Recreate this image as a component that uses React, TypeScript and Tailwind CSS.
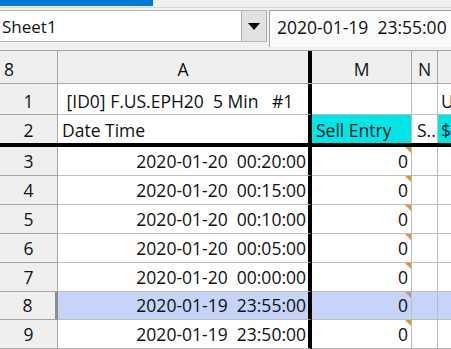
const rows = [
  { n: 3, dt: "2020-01-20  00:20:00", h: "h-[29px]" },
  { n: 4, dt: "2020-01-20  00:15:00", h: "h-[29px]" },
  { n: 5, dt: "2020-01-20  00:10:00", h: "h-[29px]" },
  { n: 6, dt: "2020-01-20  00:05:00", h: "h-[29px]" },
  { n: 7, dt: "2020-01-20  00:00:00", h: "h-[29px]" },
  { n: 8, dt: "2020-01-19  23:55:00", h: "h-[28px]", selected: true },
  { n: 9, dt: "2020-01-19  23:50:00", h: "h-[29px]" },
];

function Corner({ selected }: { selected?: boolean }) {
  return (
    <div
      className={`absolute right-0 top-0 w-0 h-0 border-t-[6px] border-l-[6px] border-l-transparent ${
        selected ? "border-t-[#b39a90]" : "border-t-[#e8912f]"
      }`}
    />
  );
}

export default function App() {
  return (
    <div className="w-[451px] h-[349px] overflow-hidden bg-[#f0f0f0] text-[17.5px] leading-[23px] text-[#111] font-['Open_Sans',sans-serif]">
      {/* window strip */}
      <div className="flex h-[8px] border-b border-[#d4d4d4]">
        <div className="w-[153px] h-[6px] bg-[#0078d7]" />
      </div>

      {/* name box + formula bar */}
      <div className="flex h-[42px] pt-[2px]">
        <div className="flex h-[32px] w-[267px] border-y border-[#b9b9b9] bg-white">
          <div className="flex-1 flex items-end pl-[2px] pb-[3px] text-[17px]">Sheet1</div>
          <div className="w-[26px] flex items-center justify-center bg-[#e1e1e1] border-l border-r border-[#adadad]">
            <div className="w-0 h-0 border-x-[6px] border-x-transparent border-t-[7px] border-t-black" />
          </div>
        </div>
        <div className="ml-[2px] flex-1 h-[37px] border-l border-t border-[#a0a0a0] bg-[#fbfbfb] flex items-start pt-[5px] pl-[7px] whitespace-pre">
          2020-01-19  23:55:00
        </div>
      </div>

      {/* column header row */}
      <div className="flex h-[34px] border-y border-[#a6a6a6] bg-[#efefef]">
        <div className="w-[58px] border-r border-[#a6a6a6] flex items-end pl-[4px] pb-[2px]">8</div>
        <div className="w-[254px] border-r-4 border-black flex items-end justify-center pb-[2px]">A</div>
        <div className="w-[100px] border-r border-[#a6a6a6] flex items-end justify-center pb-[2px]">M</div>
        <div className="w-[26px] border-r border-[#a6a6a6] flex items-end justify-center pb-[2px]">N</div>
        <div className="flex-1" />
      </div>

      {/* row 1 */}
      <div className="flex h-[31px] bg-white">
        <div className="w-[58px] bg-[#efefef] border-r border-b border-[#a6a6a6] flex items-end justify-center pb-[1px]">1</div>
        <div className="w-[254px] border-r-4 border-r-black border-b border-b-[#bdbdbd] flex items-end pl-[4px] pb-[1px] whitespace-pre overflow-hidden">
          {" [ID0] F.US.EPH20  5 Min   #1"}
        </div>
        <div className="w-[100px] border-r border-b border-[#bdbdbd]" />
        <div className="w-[26px] border-r border-b border-[#bdbdbd]" />
        <div className="flex-1 border-b border-[#bdbdbd] flex items-end pl-[3px] pb-[1px] overflow-hidden">U</div>
      </div>

      {/* row 2 */}
      <div className="flex h-[32px] bg-white border-b-4 border-black">
        <div className="w-[58px] bg-[#efefef] border-r border-[#a6a6a6] flex items-end justify-center pb-[1px]">2</div>
        <div className="w-[254px] border-r-4 border-black flex items-end pl-[4px] pb-[1px]">Date Time</div>
        <div className="w-[100px] bg-[#00e6e6] border-r border-[#bdbdbd] flex items-end pl-[4px] pb-[1px] whitespace-pre">Sell Entry</div>
        <div className="w-[26px] border-r border-[#bdbdbd] flex items-end pl-[5px] pb-[1px] overflow-hidden">S..</div>
        <div className="flex-1 bg-[#00e6e6] flex items-end pl-[3px] pb-[1px] overflow-hidden">$</div>
      </div>

      {/* data rows */}
      {rows.map((r) => (
        <div key={r.n} className={`flex ${r.h} ${r.selected ? "bg-[#c6d4fa]" : "bg-white"}`}>
          <div
            className={`w-[58px] bg-[#efefef] border-b border-b-[#a6a6a6] flex items-end justify-center pb-[2px] ${
              r.selected ? "border-r-[3px] border-r-[#8e8e8e]" : "border-r border-r-[#a6a6a6]"
            }`}
          >
            {r.n}
          </div>
          <div className="w-[254px] border-r-4 border-r-black border-b border-b-[#bdbdbd] flex items-end justify-end pr-[2px] pb-[2px] whitespace-pre">
            {r.dt}
          </div>
          <div className="relative w-[100px] border-r border-b border-[#bdbdbd] flex items-end justify-end pr-[3px] pb-[2px]">
            0
            <Corner selected={r.selected} />
          </div>
          <div className="w-[26px] border-r border-b border-[#bdbdbd]" />
          <div className="flex-1 border-b border-[#bdbdbd]" />
        </div>
      ))}
    </div>
  );
}
